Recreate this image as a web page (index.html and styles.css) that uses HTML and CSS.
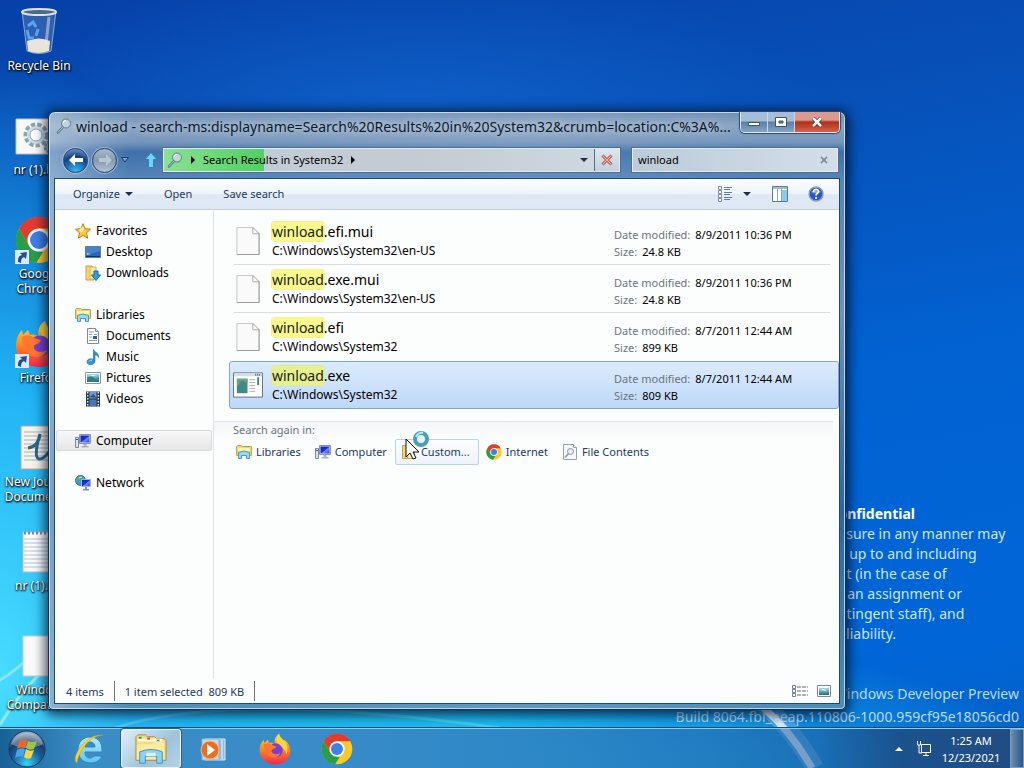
FILE: index.html
```
<!DOCTYPE html>
<html lang="en">
<head>
    <meta charset="utf-8">
    <title>Search Results in System32</title>
    <link rel="stylesheet" href="styles.css">
</head>
<body>
    <!-- shared icons -->
    <svg class="sprite" aria-hidden="true">
        <defs>
            <linearGradient id="orange" x1="0" y1="0" x2="0" y2="1"><stop offset="0" stop-color="#ffd83a"/><stop offset=".5" stop-color="#ff8a1e"/><stop offset="1" stop-color="#f5264f"/></linearGradient>
            <linearGradient id="screen" x1="0" y1="0" x2="1" y2="1"><stop offset="0" stop-color="#0a1fc0"/><stop offset=".5" stop-color="#1c30d8"/><stop offset=".55" stop-color="#6f8df2"/><stop offset="1" stop-color="#2544d0"/></linearGradient>
            <linearGradient id="ieblue" x1="0" y1="0" x2="0" y2="1"><stop offset="0" stop-color="#b5eafc"/><stop offset="1" stop-color="#5cc4f2"/></linearGradient>
            <linearGradient id="sky" x1="0" y1="0" x2="0" y2="1"><stop offset="0" stop-color="#9fdcf2"/><stop offset="1" stop-color="#256f7c"/></linearGradient>
            <radialGradient id="orb" cx=".5" cy=".9" r=".9"><stop offset="0" stop-color="#35d4f5"/><stop offset=".45" stop-color="#17609a"/><stop offset=".7" stop-color="#1a3c66"/><stop offset="1" stop-color="#a9c0d2"/></radialGradient>
        </defs>
        <symbol id="i-search" viewBox="0 0 16 16">
            <path d="M7 9L2 14.500" stroke="#5d7384" stroke-width="2.500" stroke-linecap="round"/>
            <path d="M7 9L2 14.500" stroke="#b9c8d2" stroke-width="1"/>
            <circle cx="10" cy="5.500" r="4.500" fill="#cfdfe8" fill-opacity=".7" stroke="#64798a"/>
            <path d="M7 5a3 3 0 0 1 3-2.500" fill="none" stroke="#fff"/>
        </symbol>
        <symbol id="i-star" viewBox="0 0 16 16">
            <path d="M8 .7l2.200 5 5.300.5-4 3.600 1.200 5.400L8 12.400l-4.700 2.800 1.200-5.400-4-3.600 5.300-.5z" fill="#fbc53d" stroke="#c8791b"/>
            <path d="M8 3l1.300 3.500L6 10 4 7z" fill="#fff0a0"/>
        </symbol>
        <symbol id="i-desktop" viewBox="0 0 16 16">
            <path d="M.5 2.500h15v11H.5z" fill="#2b63b8" stroke="#5b7ca6"/>
            <path d="M1 3h14v4L1 11z" fill="#4a80c8"/><path d="M1 12h14v1H1z" fill="#12345f"/><path d="M2 9l4 1-4 1z" fill="#8ddcf5"/>
        </symbol>
        <symbol id="i-downloads" viewBox="0 0 16 16">
            <path d="M1 1h6l2 2v12H1z" fill="#f3d679" stroke="#c9a341"/><path d="M5 2h6v12H5z" fill="#fae9a6" stroke="#d5b55a"/>
            <path d="M9 6h4v4h2.500L11 15.500 6.500 10H9z" fill="#2f9ee0" stroke="#1868ac"/>
        </symbol>
        <symbol id="i-library" viewBox="0 0 16 16">
            <path d="M.5 2.500l1-1h4l1 1h9v9H.5z" fill="#f2d474" stroke="#c8a44a"/>
            <path d="M2 4h12v3H2z" fill="#fdf2b6"/><path d="M9 2h4v1H9z" fill="#57b36a"/>
            <path d="M2.500 8.500q5.500-3 11 0v6h-3v-3h-5v3h-3z" fill="#9ad8f0" stroke="#4a9ac0"/>
        </symbol>
        <symbol id="i-document" viewBox="0 0 16 16">
            <path d="M2.500.5h8l3 3v12h-11z" fill="#fff" stroke="#7d8d99"/><path d="M10.500.5v3h3" fill="#dce6ec" stroke="#7d8d99"/>
            <path d="M4 4h5M4 6.500h3M9 6.500h3M4 9h3M4 12.500h8" stroke="#8aa1b4"/><path d="M8 8h4v3H8z" fill="#3b5a77"/>
        </symbol>
        <symbol id="i-music" viewBox="0 0 16 16">
            <path d="M8.500.5c1 3 5.500 3 5 8-.5-2-2-2.500-3.500-2.500v6c0 4.500-8 5-8 1 0-3 3.500-4 6.500-2.500z" fill="#2f94d8" stroke="#1d67a8" stroke-width=".6"/>
            <path d="M4 12.500c.5-1.500 2-1.500 3-1" stroke="#a5e0ff" fill="none"/>
        </symbol>
        <symbol id="i-picture" viewBox="0 0 16 16">
            <path d="M.5 2.500h15v11H.5z" fill="#fff" stroke="#8698a5"/><path d="M2 4h12v8H2z" fill="url(#sky)"/>
            <path d="M2 8q4-3 7 0t5-1v5H2z" fill="#2c7f83"/><path d="M3 6l5-1 4 1z" fill="#fff"/>
        </symbol>
        <symbol id="i-video" viewBox="0 0 16 16">
            <path d="M1 .5h14v15H1z" fill="#273445"/><path d="M4.500 1h7v6.500h-7z" fill="#6c9ccc"/><path d="M4.500 8.500h7V15h-7z" fill="#4975b5"/>
            <path d="M2.700 1v15M13.300 1v15" stroke="#e8eef5" stroke-width="1.500" stroke-dasharray="1.500 1.500"/><path d="M4.500 6l4-3 3 4z" fill="#334d9a"/>
        </symbol>
        <symbol id="i-computer" viewBox="0 0 16 16">
            <path d="M.5 4.500h3v10h-3z" fill="#dfe4ea" stroke="#7a8796"/><path d="M1 6.500h2" stroke="#4a5a70"/>
            <path d="M4.500 1.500h11v9h-11z" fill="#d5dbe6" stroke="#8994a8"/><path d="M5.500 2.500h9v7h-9z" fill="url(#screen)"/>
            <path d="M8.500 11h3v2h2v1.500h-7V13h2z" fill="#aab4c2"/>
        </symbol>
        <symbol id="i-network" viewBox="0 0 16 16">
            <circle cx="5.500" cy="5.500" r="5" fill="#3d9bd2" stroke="#277396"/><path d="M2 2q3-2 5 0L5 5 3 5 2 8Q0 5 2 2z" fill="#53b06b"/><path d="M4 3l3-1M6 6l3-2" stroke="#c7f1ff"/>
            <path d="M6.500 4.500h9v7h-9z" fill="url(#screen)" stroke="#a9b4c8"/><path d="M10 12h2v2h2v1.500H8V14h2z" fill="#8090a5"/>
        </symbol>
        <symbol id="i-custom" viewBox="0 0 16 16">
            <path d="M1.500 1.500h6l2 2v11h-8z" fill="#f2d474" stroke="#c8a44a"/><path d="M6.500 4.500h7v10h-7z" fill="#f9e59a" stroke="#c8a44a"/>
        </symbol>
        <symbol id="i-filesearch" viewBox="0 0 16 16">
            <path d="M1.500.5h10l3 3v12h-13z" fill="#f7f9fa" stroke="#98a2aa"/><path d="M11.500.5v3h3" fill="#fff" stroke="#98a2aa"/>
            <circle cx="8.500" cy="7.500" r="3" fill="#e6f0f6" stroke="#8a9aa8"/><path d="M6.500 9.500L3 13.500" stroke="#8a9aa8" stroke-width="1.500"/>
        </symbol>
        <symbol id="i-file" viewBox="0 0 24 29">
            <path d="M.5.500h16.500l6.500 6.500v21.500H.5z" fill="#fafafa" stroke="#c5c5c5"/><path d="M23.500 7v21.500H.5" fill="none" stroke="#9d9d9d"/>
            <path d="M17 .5V7h6.500z" fill="#fff" stroke="#a5a5a5"/>
        </symbol>
        <symbol id="i-exe" viewBox="0 0 31 26">
            <path d="M.5.500h30v25H.5z" fill="#fff" stroke="#5d7085"/><path d="M1 1h29v3H1z" fill="#d6dfe8"/><path d="M23 2.500h6" stroke="#4c6075" stroke-width="2" stroke-dasharray="1 1"/>
            <path d="M4 6.500h11v15H4z" fill="#43878a"/><path d="M4 15l5-7 6 3V6.500H4z" fill="#66a582"/>
            <path d="M17 7.500h6M17 10.500h6M17 13.500h6M17 16.500h6M17 19.500h6" stroke="#bba6a6"/><path d="M25 5h2v8h-2z" fill="#467e91"/>
        </symbol>
        <symbol id="i-chrome" viewBox="0 0 48 48">
            <circle cx="24" cy="24" r="23" fill="#fbc928"/>
            <path d="M4 12.500A23 23 0 0 1 44 12.500H24L14 30z" fill="#e33b2e"/>
            <path d="M4 12.500l10 17.200 10 5.300 4 1-6.800 11A23 23 0 0 1 4 12.500z" fill="#2a9d4b"/>
            <circle cx="24" cy="24" r="11.500" fill="#fff"/><circle cx="24" cy="24" r="9" fill="#3f7fe8"/>
        </symbol>
        <symbol id="i-firefox" viewBox="0 0 48 48">
            <path d="M30 1c1 5 4 7 7 10 4-1 10 8 10 16 0 12-10 20-23 20S1 38 1 26c0-7 2-12 6-16l1 5 5-5 2 5c4-1 6 0 9 2-2-7 1-13 6-16z" fill="url(#orange)"/>
            <path d="M30 1c1 5 4 7 7 10 6 5 7 15 4 21-2-8-6-12-11-13-6-4-4-12 0-18z" fill="#ffd93b"/>
            <circle cx="25" cy="26" r="10.500" fill="#7a3fd4"/>
            <path d="M7 17c5-3 9-2 12 1l7 2c-1 4-6 4-7 6-1 5 6 8 13 4-3 9-15 9-20 2-3-4-4-9-5-15z" fill="#ff772c"/>
        </symbol>
        <symbol id="i-shortcut" viewBox="0 0 14 14">
            <path d="M0 0h14v14H0z" fill="#dce9f5"/><path d="M3 12c0-5 1-6 4-7L5 3l7-1-1 7-2-2c-2 1-3 2-3 6z" fill="#20508f"/>
        </symbol>
    </svg>

    <main class="desktop">
        <svg class="streaks" viewBox="0 0 1024 768" preserveAspectRatio="none" aria-hidden="true">
            <g fill="none">
                <path d="M-10 685Q25 670 60 620" stroke="#c8f6ff" stroke-opacity=".5" stroke-width="3"/>
                <path d="M0 725Q20 690 50 665" stroke="#d6ffd0" stroke-opacity=".5" stroke-width="3"/>
                <path d="M115 728Q230 690 500 728" stroke="#8ff0ff" stroke-opacity=".3" stroke-width="3"/>
                <path d="M690 660Q770 690 815 768" stroke="#8cc8ff" stroke-opacity=".4" stroke-width="18"/>
                <path d="M700 672Q770 695 812 768" stroke="#e5f4ff" stroke-opacity=".9" stroke-width="7"/>
            </g>
        </svg>

        <ul class="shortcuts">
            <li>
                <svg viewBox="0 0 48 48"><path d="M7 3l5 40q12 5 24 0l5-40z" fill="#5f83bb" fill-opacity=".45" stroke="#8fa8c8"/><path d="M12 33q12-5 23 0l-1 10q-11 4-21 0z" fill="#e8e6db"/><ellipse cx="24" cy="4" rx="17" ry="3" fill="#4f6885" stroke="#dce4ea" stroke-width="2"/><path d="M13 18l5-4 3 5M12 22l2 8h5M23 21l-2 7" fill="none" stroke="#5aa2ee" stroke-width="3"/><path d="M34 9l-3 27" stroke="#dfecf7" stroke-opacity=".5" stroke-width="3"/></svg>
                <span>Recycle Bin</span>
            </li>
            <li>
                <svg viewBox="0 0 48 48"><path d="M1 7h46v35H1z" fill="#f8f9f7" stroke="#bac3c8"/><circle cx="21" cy="23" r="10" fill="#e2ebf0" stroke="#8ba3b2" stroke-width="5" stroke-dasharray="4 2"/><circle cx="21" cy="23" r="9" fill="#cfdee6"/><circle cx="21" cy="23" r="6" fill="#fff" stroke="#8ea5b3"/><circle cx="35" cy="35" r="5" fill="#c0ccd3" stroke="#899ca9" stroke-width="3" stroke-dasharray="3 1"/></svg>
                <span>nr (1).bat</span>
            </li>
            <li>
                <svg viewBox="0 0 48 48"><use href="#i-chrome"/><use href="#i-shortcut" y="34" width="14" height="14"/></svg>
                <span>Google Chrome</span>
            </li>
            <li>
                <svg viewBox="0 0 48 48"><use href="#i-firefox"/><use href="#i-shortcut" y="34" width="14" height="14"/></svg>
                <span>Firefox</span>
            </li>
            <li>
                <svg viewBox="0 0 48 48"><path d="M6 2h36v43H6z" fill="#f8f3e8" stroke="#b9a99c"/><path d="M9 8h30M9 12h30M9 16h30M9 20h30M9 24h30M9 28h30M9 32h30M9 36h30" stroke="#9bb5c9"/><path d="M13 24c8-1 11-6 12-14-3 9-6 24-1 25 4 1 8-4 12-10" fill="none" stroke="#2c6685" stroke-width="3"/></svg>
                <span>New Journal Document...</span>
            </li>
            <li>
                <svg viewBox="0 0 48 48"><path d="M8 4h32v40H8z" fill="#fbfcff" stroke="#b5bdc8"/><path d="M9 5h31" stroke="#7e8b99" stroke-width="3" stroke-dasharray="2 2"/><path d="M9 11h30M9 15h30M9 19h30M9 23h30M9 27h30M9 31h30M9 35h30M9 39h30" stroke="#b3bfd9"/></svg>
                <span>nr (1).txt</span>
            </li>
            <li>
                <svg viewBox="0 0 48 48"><path d="M8 4h32v40H8z" fill="#fafafa" stroke="#c5ccd0"/></svg>
                <span>Window Compatib...</span>
            </li>
        </ul>

        <div class="notice">
            <strong>Microsoft Confidential</strong>
            Unauthorized use or disclosure in any manner may<br>
            result in disciplinary action up to and including<br>
            termination of employment (in the case of<br>
            employees) termination of an assignment or<br>
            contract (in the case of contingent staff), and<br>
            potential civil and criminal liability.
        </div>
        <div class="build">Windows Developer Preview<br>Build 8064.fbl_eeap.110806-1000.959cf95e18056cd0</div>

        <section class="window">
            <header class="titlebar">
                <svg class="icon"><use href="#i-search"/></svg>
                <h1>winload - search-ms:displayname=Search%20Results%20in%20System32&amp;crumb=location:C%3A%...</h1>
                <div class="controls">
                    <button class="min" aria-label="Minimize"><svg viewBox="0 0 12 10"><path d="M.5 5.500h11v3H.5z" fill="#fff" stroke="#40536b"/></svg></button>
                    <button class="max" aria-label="Maximize"><svg viewBox="0 0 12 10"><path d="M.5.500h11v9H.5zM4 4v2h4V4z" fill="#fff" fill-rule="evenodd" stroke="#40536b"/></svg></button>
                    <button class="close" aria-label="Close"><svg viewBox="0 0 12 10"><path d="M2 1l8 8M10 1L2 9" stroke="#6c2a2a" stroke-width="4"/><path d="M2 1l8 8M10 1L2 9" stroke="#fff" stroke-width="2.500"/></svg></button>
                </div>
            </header>

            <nav class="navbar">
                <button class="round back" aria-label="Back"><svg viewBox="0 0 16 16"><path d="M1 8l6-6v4h8v4H7v4z" fill="#fff"/></svg></button>
                <button class="round forward" aria-label="Forward"><svg viewBox="0 0 16 16"><path d="M15 8L9 2v4H2v4h7v4z" fill="#b6c6d6"/></svg></button>
                <button class="plain history" aria-label="Recent pages"><svg viewBox="0 0 8 6"><path d="M.5.500h7L4 5z" fill="#7fa0c8" stroke="#173e70"/></svg></button>
                <button class="plain up" aria-label="Up"><svg viewBox="0 0 14 16"><path d="M7 .5l6 7H9.500v8h-5v-8H1z" fill="#6fd2fb" stroke="#2b7fc0"/></svg></button>
                <div class="address">
                    <svg class="icon"><use href="#i-search"/></svg>
                    <i class="arrow"></i>
                    <a href="#">Search Results in System32</a>
                    <i class="arrow"></i>
                    <button class="plain drop" aria-label="Previous locations"><i class="caret"></i></button>
                    <button class="stop" aria-label="Stop"><svg viewBox="0 0 12 12"><path d="M1.500 1.500l9 9M10.500 1.500l-9 9" stroke="#a94a4a" stroke-width="3"/><path d="M1.500 1.500l9 9M10.500 1.500l-9 9" stroke="#f7aaa3" stroke-width="1.200"/></svg></button>
                </div>
                <div class="searchbox">
                    <input type="text" value="winload" aria-label="Search System32">
                    <button class="plain" aria-label="Clear search"><svg viewBox="0 0 8 8"><path d="M1 1l6 6M7 1L1 7" stroke="#6d7f90" stroke-width="1.500"/></svg></button>
                </div>
            </nav>

            <div class="client">
                <div class="toolbar">
                    <button>Organize <i class="caret"></i></button>
                    <button>Open</button>
                    <button>Save search</button>
                    <span class="spacer"></span>
                    <div class="view-tools">
                        <button aria-label="Change view"><svg viewBox="0 0 16 16"><path d="M1.500.5h3v3h-3zM1.500 4.500h3v3h-3zM1.500 8.500h3v3h-3zM1.500 12.500h3v3h-3z" fill="#fff" stroke="#7b8ba3"/><path d="M7 1.500h8M7 3.500h6M7 6.500h8M7 8.500h6M7 11.500h8M7 13.500h6" stroke="#607c96"/></svg></button>
                        <button aria-label="More views"><i class="caret"></i></button>
                    </div>
                    <div class="pane-tools">
                        <button aria-label="Preview pane"><svg viewBox="0 0 16 16"><path d="M.5.500h15v15H.5z" fill="#fff" stroke="#5a7898"/><path d="M1 1h14v2H1z" fill="#a3bad0"/><path d="M10 4h5v11h-5z" fill="#8ccbf0"/><path d="M5.500 3v12M9.500 3v12" stroke="#8fa5ba"/></svg></button>
                        <button aria-label="Help"><svg viewBox="0 0 16 16"><circle cx="8" cy="8" r="7" fill="#2b56bd" stroke="#8da0cc" stroke-width="1.500"/><path d="M3 6q5-5 10 0-5 3-10 0z" fill="#7ca2ea"/><path d="M5.500 6c0-3.500 5-3.500 5-.5 0 1.800-2.500 1.800-2.500 4M8 11v2" fill="none" stroke="#fff" stroke-width="1.700"/></svg></button>
                    </div>
                </div>

                <div class="content">
                    <aside class="tree">
                        <ul>
                            <li><a href="#"><svg class="icon"><use href="#i-star"/></svg>Favorites</a></li>
                            <li class="sub"><a href="#"><svg class="icon"><use href="#i-desktop"/></svg>Desktop</a></li>
                            <li class="sub"><a href="#"><svg class="icon"><use href="#i-downloads"/></svg>Downloads</a></li>
                        </ul>
                        <ul>
                            <li><a href="#"><svg class="icon"><use href="#i-library"/></svg>Libraries</a></li>
                            <li class="sub"><a href="#"><svg class="icon"><use href="#i-document"/></svg>Documents</a></li>
                            <li class="sub"><a href="#"><svg class="icon"><use href="#i-music"/></svg>Music</a></li>
                            <li class="sub"><a href="#"><svg class="icon"><use href="#i-picture"/></svg>Pictures</a></li>
                            <li class="sub"><a href="#"><svg class="icon"><use href="#i-video"/></svg>Videos</a></li>
                        </ul>
                        <ul>
                            <li class="current"><a href="#"><svg class="icon"><use href="#i-computer"/></svg>Computer</a></li>
                        </ul>
                        <ul>
                            <li><a href="#"><svg class="icon"><use href="#i-network"/></svg>Network</a></li>
                        </ul>
                    </aside>

                    <div class="results">
                        <ul class="files">
                            <li>
                                <svg class="thumb"><use href="#i-file"/></svg>
                                <div class="name"><h2><mark>winload</mark>.efi.mui</h2><p>C:\Windows\System32\en-US</p></div>
                                <dl><dt>Date modified:</dt><dd>8/9/2011 10:36 PM</dd><dt>Size:</dt><dd>24.8 KB</dd></dl>
                            </li>
                            <li>
                                <svg class="thumb"><use href="#i-file"/></svg>
                                <div class="name"><h2><mark>winload</mark>.exe.mui</h2><p>C:\Windows\System32\en-US</p></div>
                                <dl><dt>Date modified:</dt><dd>8/9/2011 10:36 PM</dd><dt>Size:</dt><dd>24.8 KB</dd></dl>
                            </li>
                            <li>
                                <svg class="thumb"><use href="#i-file"/></svg>
                                <div class="name"><h2><mark>winload</mark>.efi</h2><p>C:\Windows\System32</p></div>
                                <dl><dt>Date modified:</dt><dd>8/7/2011 12:44 AM</dd><dt>Size:</dt><dd>899 KB</dd></dl>
                            </li>
                            <li class="selected">
                                <svg class="thumb"><use href="#i-exe"/></svg>
                                <div class="name"><h2><mark>winload</mark>.exe</h2><p>C:\Windows\System32</p></div>
                                <dl><dt>Date modified:</dt><dd>8/7/2011 12:44 AM</dd><dt>Size:</dt><dd>809 KB</dd></dl>
                            </li>
                        </ul>
                        <div class="again">
                            <p>Search again in:</p>
                            <div class="places">
                                <button><svg class="icon"><use href="#i-library"/></svg>Libraries</button>
                                <button><svg class="icon"><use href="#i-computer"/></svg>Computer</button>
                                <button class="hover"><svg class="icon"><use href="#i-custom"/></svg>Custom...</button>
                                <button><svg class="icon"><use href="#i-chrome"/></svg>Internet</button>
                                <button><svg class="icon"><use href="#i-filesearch"/></svg>File Contents</button>
                            </div>
                        </div>
                    </div>
                </div>

                <footer class="status">
                    <span>4 items</span>
                    <span>1 item selected&nbsp; 809 KB</span>
                    <div class="views">
                        <button aria-label="Details"><svg viewBox="0 0 16 12"><path d="M.5.500h3v3h-3zM.5 4.500h3v3h-3zM.5 8.500h3v3h-3z" fill="#fff" stroke="#71808c"/><path d="M5 2h11M5 6h11M5 10h11" stroke="#5d6a75" stroke-dasharray="4 1"/></svg></button>
                        <button aria-label="Thumbnails"><svg viewBox="0 0 14 12"><path d="M.5.500h13v11H.5z" fill="#fff" stroke="#7a8c99"/><path d="M2 3h10v7H2z" fill="url(#sky)"/><path d="M3 5l4-1 3 2z" fill="#fff"/></svg></button>
                    </div>
                </footer>
            </div>
        </section>

        <svg class="cursor" viewBox="0 0 28 32" aria-hidden="true">
            <circle cx="16" cy="9" r="6" fill="#e3f4f6" stroke="#4e9fae" stroke-width="4"/><path d="M11 7a6 6 0 0 1 7-4" fill="none" stroke="#b2f0ee" stroke-width="2"/>
            <path d="M1 9v18l4-4 3 6 3-1-3-6h6z" fill="#fff" stroke="#111"/>
        </svg>
    </main>

    <footer class="taskbar">
        <button class="start" aria-label="Start">
            <svg viewBox="0 0 38 38"><circle cx="19" cy="19" r="18" fill="url(#orb)" stroke="#123b60"/><path d="M3 14a17 17 0 0 1 32 0q-16 8-32 0z" fill="#fff" fill-opacity=".3"/><path d="M11 11q4-3 8-1l-2 8q-4-2-8 1z" fill="#f0642c"/><path d="M20 11q4 2 9 0l-3 8q-4 2-8-1z" fill="#9bc63e"/><path d="M9 20q4-3 8-1l-2 8q-4-2-8 1z" fill="#46a4e8"/><path d="M18 19q4 3 8 1l-3 8q-4 2-7-1z" fill="#ffd24a"/></svg>
        </button>
        <button class="task" aria-label="Internet Explorer">
            <svg viewBox="0 0 32 32"><path d="M29 19v-2C29 8 24 4 17 4S5 9 5 17s5 13 13 13c6 0 9-3 11-7h-8c-1 1-2 2-4 2-3 0-5-2-5-6zM12 14c0-3 2-5 5-5s5 2 5 5z" fill="url(#ieblue)" fill-rule="evenodd" stroke="#2c87c4"/><path d="M4 30C-3 26 12 0 30 2c-13 1-24 15-26 28z" fill="#ffd21f" stroke="#c8a018" stroke-width=".5"/></svg>
        </button>
        <button class="task active" aria-label="File Explorer">
            <svg viewBox="0 0 34 32"><path d="M1 28V3l2-2h8l2 2h8l2 2h8l2 2v21z" fill="#f3db83" stroke="#a98a3c"/><path d="M3 5h26v3H3z" fill="#fffbd9"/><path d="M4 3h3v2H4z" fill="#2c9b4d"/><path d="M13 4h3v2h-3z" fill="#d04438"/><path d="M23 6h3v2h-3z" fill="#3c85bd"/><path d="M2 11h15l3-3h11v19H2z" fill="#fbeb9e"/><path d="M5 19q12-5 24 0v12h-6v-7H11v7H5z" fill="#8ed2f2" stroke="#3d8dc0"/><path d="M12 20h10v4H12z" fill="#fff" fill-opacity=".7"/></svg>
        </button>
        <button class="task" aria-label="Windows Media Player">
            <svg viewBox="0 0 32 32"><path d="M8 6h20v21H8z" fill="#91bdd9" stroke="#d8ecf7"/><path d="M5 6h17v21H5z" fill="#c4dce9" stroke="#8fb2c8"/><path d="M25 7v19" stroke="#eaf7ff"/><circle cx="13" cy="17" r="9" fill="#f06d1f" stroke="#f8b67c"/><path d="M10 11l8 6-8 6z" fill="#fff"/></svg>
        </button>
        <button class="task" aria-label="Firefox"><svg><use href="#i-firefox"/></svg></button>
        <button class="task" aria-label="Google Chrome"><svg><use href="#i-chrome"/></svg></button>
        <div class="tray">
            <button class="plain" aria-label="Show hidden icons"><svg viewBox="0 0 8 5"><path d="M0 5l4-4 4 4z" fill="#fff"/></svg></button>
            <button class="plain net" aria-label="Network"><svg viewBox="0 0 16 16"><path d="M5.500 3.500h9v8h-9zM10 12v2M7 14.500h6M1.500 0v4h3V0M3 4v8h3" fill="none" stroke="#fff"/></svg></button>
            <time datetime="2021-12-23T01:25">1:25 AM<br>12/23/2021</time>
        </div>
        <button class="peek" aria-label="Show desktop"></button>
    </footer>
</body>
</html>
```
FILE: styles.css
```
* { box-sizing: border-box; }
body {
    margin: 0;
    height: 100vh;
    display: flex;
    flex-direction: column;
    overflow: hidden;
    font: 12px/16px "Noto Sans", "Open Sans", sans-serif;
    color: #000;
    background:
        radial-gradient(ellipse 300px 620px at 0 88%, #48dcff 0%, #22b4f5 45%, rgba(10, 130, 230, 0) 100%),
        radial-gradient(ellipse 800px 160px at 25% 100%, #1dbaf0 40%, rgba(10, 130, 230, 0)),
        radial-gradient(ellipse 420px 160px at 40% 16%, rgba(20, 110, 215, .6), rgba(10, 130, 230, 0)),
        linear-gradient(170deg, #0640a8 0%, #0750b8 25%, #0262d2 55%, #0066d8 85%, #0560c5);
}
ul, dl, dd, p, h1, h2 { margin: 0; padding: 0; font-size: inherit; font-weight: normal; }
ul { list-style: none; }
a { color: inherit; text-decoration: none; }
button, input { font: inherit; color: inherit; background: none; border: 0; padding: 0; }
button { display: flex; align-items: center; justify-content: center; }
svg { flex: none; }
.sprite { position: absolute; width: 0; height: 0; }
.icon { width: 16px; height: 16px; }
.caret { border: 4px solid transparent; border-top-color: #1e2f45; border-bottom: 0; }
.address, .toolbar, .files dl, .again, .status, .tray { font-size: 11px; }

/* desktop */
.desktop { position: relative; flex: 1; }
.streaks { position: absolute; top: 0; left: 0; width: 100vw; height: 100vh; }
.shortcuts { position: absolute; top: 8px; left: 0; width: 78px; }
.shortcuts li {
    height: 104px;
    display: flex;
    flex-direction: column;
    align-items: center;
    gap: 2px;
    text-align: center;
    line-height: 15px;
    color: #fff;
    text-shadow: 0 1px 2px #000, 1px 1px 2px #000;
}
.shortcuts svg { width: 48px; height: 48px; }
.notice {
    position: absolute;
    left: 670px;
    top: 504px;
    font-size: 14px;
    line-height: 20px;
    white-space: nowrap;
    color: #cfe6fb;
}
.notice strong { display: block; width: 245px; text-align: right; color: #fff; }
.build {
    position: absolute;
    right: 5px;
    bottom: 0;
    font-size: 14px;
    line-height: 23px;
    text-align: right;
    white-space: nowrap;
    color: #b9daf6;
}
.cursor { position: absolute; left: 405px; top: 430px; width: 28px; height: 32px; }

/* explorer window */
.window {
    position: absolute;
    top: 111px;
    left: 48px;
    right: 178px;
    bottom: 18px;
    display: flex;
    flex-direction: column;
    padding: 0 5px 5px;
    border: 1px solid #17324d;
    border-radius: 7px 7px 5px 5px;
    background:
        linear-gradient(90deg, rgba(200, 215, 230, .5), rgba(200, 215, 230, 0) 10%, rgba(255, 255, 255, .1) 60%, rgba(255, 255, 255, 0) 90%),
        linear-gradient(#6d8db3 0, #8aa5c3 14px, #7595bb 30px, #3f70ab 40px, #5684b8 66px, #7192b6 200px, #2c66a3 400px, #4e8fb8 100%);
    box-shadow: inset 0 0 0 1px rgba(220, 238, 250, .75), 0 2px 12px 3px rgba(0, 10, 30, .75);
}
.titlebar { display: flex; align-items: flex-start; height: 35px; padding-left: 2px; }
.titlebar .icon { margin-top: 6px; }
.titlebar h1 {
    flex: 1;
    min-width: 0;
    padding: 4px 8px 0 4px;
    font-size: 14px;
    line-height: 22px;
    white-space: nowrap;
    overflow: hidden;
    text-overflow: ellipsis;
    color: #0c1a2a;
    text-shadow: 0 0 8px rgba(255, 255, 255, .7);
}
.controls {
    display: flex;
    border: 1px solid #d9e6f2;
    border-top: 0;
    border-radius: 0 0 5px 5px;
    overflow: hidden;
    box-shadow: 0 0 1px 1px #2f4c70;
}
.controls button { width: 27px; height: 20px; border-right: 1px solid #c5d5e5; background: linear-gradient(#a5bdd6 0 45%, #5a7fa9 50%, #86a5c5); }
.controls svg { width: 12px; height: 10px; }
.controls .close { width: 44px; border-right: 0; background: linear-gradient(#dc9a8e 0 40%, #b32f1c 50%, #d2624b); }

.navbar { display: flex; align-items: center; height: 26px; margin-bottom: 5px; padding: 0 2px 0 9px; }
.plain svg { display: block; }
.round { width: 25px; height: 25px; border-radius: 50%; border: 1px solid #23476f; box-shadow: 0 0 0 1px rgba(200, 220, 240, .5); }
.round svg { width: 16px; height: 16px; }
.back { background: radial-gradient(circle at 50% 100%, #37c1f6, #1455a5 50%, #123f85 60%, #8faed2); }
.forward { margin-left: 4px; background: linear-gradient(#a9bacb, #8499b0 50%, #b4c4d4); }
.history { margin-left: 4px; }
.history svg { width: 8px; height: 6px; }
.up { margin: 0 5px 0 15px; }
.up svg { width: 14px; height: 16px; }
.address {
    flex: 1;
    display: flex;
    align-items: center;
    height: 24px;
    padding-left: 3px;
    border: 1px solid #e0ebf3;
    outline: 1px solid #4c6f93;
    background: linear-gradient(90deg, #8be094, #4fd160 22%, #c1ccd6 22%, #c5ccd2 60%, #cfdae4);
}
.arrow { margin: 0 8px; border: 4px solid transparent; border-left-color: #000; border-right: 0; }
.drop { width: 20px; height: 22px; margin-left: auto; }
.stop { width: 25px; height: 22px; border-left: 1px solid #51708f; background: linear-gradient(#dde6ee, #c3d0dc); }
.stop svg { width: 12px; height: 12px; }
.searchbox {
    display: flex;
    flex: 0 1 206px;
    height: 24px;
    margin-left: 12px;
    padding: 0 9px 0 5px;
    border: 1px solid #e4edf5;
    outline: 1px solid #4c6f93;
    background: linear-gradient(90deg, #bccbd9, #d3dee9);
}
.searchbox input { flex: 1; min-width: 0; outline: 0; font-size: 11px; }
.searchbox svg { width: 8px; height: 8px; }

.client { flex: 1; min-height: 0; display: flex; flex-direction: column; border: 1px solid #1c4a78; background: #fcfdfd; }
.toolbar {
    display: flex;
    height: 31px;
    padding: 0 15px 0 18px;
    gap: 31px;
    border-bottom: 1px solid #c2cedd;
    background: linear-gradient(#fbfdff, #eef4fc 50%, #e0e8f5 52%, #dee8f5);
    color: #1e395b;
}
.toolbar .caret { margin-left: 5px; }
.toolbar svg { width: 16px; height: 16px; }
.spacer { flex: 1; }
.view-tools, .pane-tools { display: flex; }
.view-tools { gap: 5px; margin-right: -10px; }
.pane-tools { gap: 20px; }

.content { flex: 1; min-height: 0; display: flex; }
.tree { width: 159px; padding: 10px 1px 0; border-right: 1px solid #dce3ea; }
.tree ul + ul { margin-top: 21px; }
.tree a { display: flex; align-items: center; gap: 5px; height: 21px; padding-left: 19px; }
.tree .sub a { padding-left: 29px; }
.tree .current a { padding-left: 18px; border: 1px solid #d9d9d9; border-radius: 2px; background: linear-gradient(#f8f8f8, #e6e6e6); }

.results { flex: 1; min-width: 0; padding-top: 7px; }
.files { padding: 0 0 12px 15px; }
.files li { display: flex; height: 48px; border: 1px solid transparent; position: relative; }
.files li:nth-child(-n+2)::after { content: ""; position: absolute; left: 4px; right: 8px; bottom: -1px; border-bottom: 1px solid #d9dcdf; }
.files .thumb { width: 30px; height: 28px; margin: 9px 9px 0 3px; }
.name { flex: 1; min-width: 0; }
.name h2 { padding-top: 3px; font-size: 14px; line-height: 22px; }
.name mark { background: #f6f88c; border-radius: 3px; box-shadow: 0 0 0 1px #f1f48c; color: #222; }
.name p { line-height: 16px; }
.files dl { width: 224px; padding-top: 8px; line-height: 17px; }
.files dt, .files dd { float: left; }
.files dt { clear: left; margin-right: 5px; color: #6c757d; }
.files .selected { border-color: #7da7d3; border-radius: 3px; background: linear-gradient(#dcebfc, #bdd8f8); }
.selected .name mark { background: #e6f08e; box-shadow: 0 0 0 1px #e0ec94; }
.again { margin-right: 6px; padding-left: 19px; border-top: 1px solid #e0e4e8; background: linear-gradient(#f5f6f7, #fcfdfd 20px); }
.again p { color: #6c757d; }
.places { display: flex; flex-wrap: wrap; gap: 1px; margin: 1px 0 0 -3px; color: #1e395b; }
.places button { gap: 4px; height: 26px; padding: 0 6px 0 5px; border: 1px solid transparent; border-radius: 2px; }
.places .hover { padding-right: 8px; border-color: #b9d3ea; background: linear-gradient(#fcfdff, #edf4fb); }

.status { display: flex; align-items: center; height: 24px; padding-left: 1px; color: #1e395b; }
.status span { padding: 3px 10px 1px; border-right: 1px solid #70767c; }
.views { display: flex; gap: 8px; margin-left: auto; padding-right: 7px; }
.views svg { width: 16px; height: 12px; }

/* taskbar */
.taskbar {
    position: relative;
    display: flex;
    height: 40px;
    border-top: 1px solid #8fcdec;
    box-shadow: 0 -1px 0 #164a78;
    background: linear-gradient(90deg, rgba(20, 85, 140, .9), rgba(60, 135, 190, .9) 8%, rgba(60, 135, 195, .9) 30%, rgba(42, 110, 180, .7) 65%, rgba(35, 85, 145, .5) 80%, rgba(30, 75, 130, .85) 88%, rgba(35, 75, 125, .95));
}
.start { width: 54px; margin-right: 5px; }
.start svg { width: 38px; height: 38px; }
.task { width: 60px; margin-right: 2px; }
.task svg { width: 32px; height: 32px; }
.task.active { border: 1px solid #e9f5fb; border-radius: 3px; background: linear-gradient(135deg, #e2eff6, #9fc3da 60%, #b5d2e3); box-shadow: 0 0 0 1px #2d6088; }
.tray { display: flex; align-items: center; margin-left: auto; color: #fff; }
.tray svg { width: 8px; height: 5px; }
.tray .net svg { width: 16px; height: 16px; }
.tray .net { margin-left: 13px; }
.tray time { width: 78px; text-align: center; line-height: 17px; }
.peek { width: 14px; border: 1px solid #7f9dbd; background: linear-gradient(90deg, #6d8eb2, #2c5585); }
```
